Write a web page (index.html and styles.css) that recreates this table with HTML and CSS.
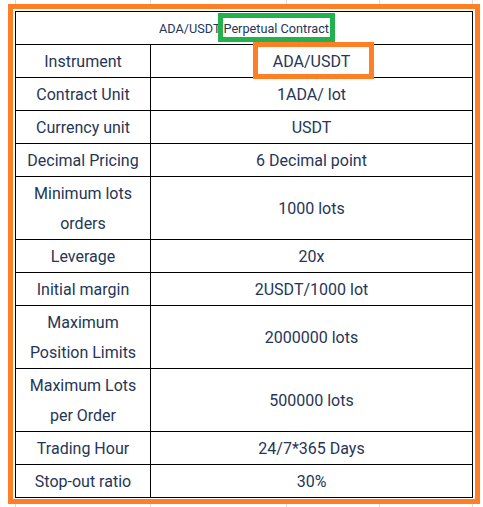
FILE: index.html
```html
<!DOCTYPE html>
<html>
<head>
<meta charset="utf-8">
<link rel="stylesheet" href="styles.css">
</head>
<body>
<div class="sheet">
  <div class="frame">
    <table class="spec">
      <colgroup><col class="c1"><col class="c2"></colgroup>
      <tr class="head"><td colspan="2">ADA/USDT <span class="mark green">Perpetual Contract</span></td></tr>
      <tr><td>Instrument</td><td><span class="mark orange">ADA/USDT</span></td></tr>
      <tr><td>Contract Unit</td><td>1ADA/ lot</td></tr>
      <tr><td>Currency unit</td><td>USDT</td></tr>
      <tr><td>Decimal Pricing</td><td>6 Decimal point</td></tr>
      <tr><td>Minimum lots<br>orders</td><td>1000 lots</td></tr>
      <tr><td>Leverage</td><td>20x</td></tr>
      <tr><td>Initial margin</td><td>2USDT/1000 lot</td></tr>
      <tr><td>Maximum<br>Position Limits</td><td>2000000 lots</td></tr>
      <tr><td>Maximum Lots<br>per Order</td><td>500000 lots</td></tr>
      <tr><td>Trading Hour</td><td>24/7*365 Days</td></tr>
      <tr><td>Stop-out ratio</td><td>30%</td></tr>
    </table>
  </div>
</div>
</body>
</html>
```
FILE: styles.css
```css
html, body {
  margin: 0;
  padding: 0;
  background: #fff;
}
body {
  width: 483px;
  height: 507px;
  overflow: hidden;
  font-family: Roboto, "Liberation Sans", sans-serif;
  color: #253657;
}
.sheet {
  height: 507px;
  padding-top: 4px;
  box-sizing: border-box;
  background-image:
    linear-gradient(#dadada, #dadada),
    linear-gradient(#dadada, #dadada),
    linear-gradient(#dadada, #dadada),
    linear-gradient(#dadada, #dadada),
    linear-gradient(#dadada, #dadada);
  background-size: 1px 100%;
  background-repeat: no-repeat;
  background-position: 15px 0, 150px 0, 286px 0, 379px 0, 472px 0;
}
.frame {
  margin-left: 8px;
  width: 472px;
  box-sizing: border-box;
  border: 5px solid #ff7f27;
  background: #fff;
  padding: 2px 2px 1px 2px;
}
.spec {
  width: 458px;
  table-layout: fixed;
  border-collapse: separate;
  border-spacing: 0;
  border-top: 1px solid #000;
  border-left: 1px solid #000;
}
.c1 { width: 135px; }
.c2 { width: 322px; }
.spec td {
  border-right: 1px solid #000;
  border-bottom: 1px solid #000;
  padding: 2px 2px 0 2px;
  text-align: center;
  vertical-align: middle;
  font-size: 16px;
  line-height: 30px;
}
.spec .head td {
  font-size: 12.7px;
}
.mark {
  position: relative;
}
.mark::after {
  content: "";
  position: absolute;
  pointer-events: none;
}
.green::after {
  left: -5px;
  right: -6px;
  top: -8px;
  bottom: -6px;
  border: 5px solid #22b14c;
}
.orange::after {
  left: -20px;
  right: -24px;
  top: -10px;
  bottom: -8px;
  border: 5px solid #ff7f27;
}
```
